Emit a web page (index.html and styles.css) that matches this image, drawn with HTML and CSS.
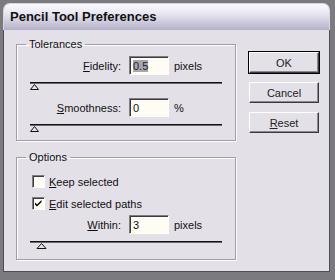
FILE: index.html
```html
<!DOCTYPE html>
<html lang="en">
<head>
    <meta charset="UTF-8">
    <title>Pencil Tool Preferences</title>
    <link rel="stylesheet" href="styles.css">
</head>
<body>
    <div class="window">
        <div class="titlebar">Pencil Tool Preferences</div>
        <div class="dialog">
            <div class="groups">
                <fieldset class="group">
                    <legend>Tolerances</legend>
                    <div class="field first">
                        <label class="field-label"><u>F</u>idelity:</label>
                        <span class="input"><span class="selected">0.5</span></span>
                        <span class="unit">pixels</span>
                    </div>
                    <div class="slider">
                        <svg width="192" height="9" viewBox="0 0 192 9">
                            <rect x="0" y="0" width="192" height="1" fill="#111"/>
                            <rect x="0" y="1" width="192" height="1" fill="#6a6870"/>
                            <polygon points="4.5,2.5 8.5,7.5 0.5,7.5" fill="#e4e0e8" stroke="#111"/>
                        </svg>
                    </div>
                    <div class="field">
                        <label class="field-label"><u>S</u>moothness:</label>
                        <span class="input">0</span>
                        <span class="unit">%</span>
                    </div>
                    <div class="slider">
                        <svg width="192" height="9" viewBox="0 0 192 9">
                            <rect x="0" y="0" width="192" height="1" fill="#111"/>
                            <rect x="0" y="1" width="192" height="1" fill="#6a6870"/>
                            <polygon points="4.5,2.5 8.5,7.5 0.5,7.5" fill="#e4e0e8" stroke="#111"/>
                        </svg>
                    </div>
                </fieldset>

                <fieldset class="group options">
                    <legend>Options</legend>
                    <div class="check first">
                        <span class="box"></span>
                        <span><u>K</u>eep selected</span>
                    </div>
                    <div class="check">
                        <span class="box">
                            <svg width="11" height="11" viewBox="0 0 11 11">
                                <path d="M2 4.5 L4 6.5 L8.5 2 L8.5 4 L4 8.5 L2 6.5 Z" fill="#000"/>
                            </svg>
                        </span>
                        <span><u>E</u>dit selected paths</span>
                    </div>
                    <div class="field within">
                        <label class="field-label"><u>W</u>ithin:</label>
                        <span class="input">3</span>
                        <span class="unit">pixels</span>
                    </div>
                    <div class="slider">
                        <svg width="192" height="9" viewBox="0 0 192 9">
                            <rect x="0" y="0" width="192" height="1" fill="#111"/>
                            <rect x="0" y="1" width="192" height="1" fill="#6a6870"/>
                            <polygon points="11.5,2.5 16,7.5 7,7.5" fill="#e4e0e8" stroke="#111"/>
                        </svg>
                    </div>
                </fieldset>
            </div>

            <div class="buttons">
                <button class="btn default">OK</button>
                <button class="btn">Cancel</button>
                <button class="btn"><u>R</u>eset</button>
            </div>
        </div>
    </div>
</body>
</html>
```

FILE: styles.css
```css
body {
    margin: 0;
    padding: 3px 0 0 3px;
    background: #7b7a7e;
    font-family: "Liberation Sans", Arial, sans-serif;
    font-size: 11px;
    color: #111;
}
.window {
    width: 327px;
}
.titlebar {
    height: 27px;
    box-sizing: border-box;
    padding: 5px 0 0 6px;
    border: 1px solid #d8d6dc;
    border-bottom: none;
    border-radius: 7px 7px 0 0;
    background: linear-gradient(#fbfaff, #e6e4f0 40%, #b4b0c8);
    font-size: 13px;
    font-weight: bold;
    line-height: 16px;
    color: #111;
}
.dialog {
    display: flex;
    height: 242px;
    box-sizing: border-box;
    padding: 7px 0 0 12px;
    border: 1px solid #4e4c5c;
    border-top: none;
    background: #e4e0e8;
}
.groups {
    width: 220px;
}
.group {
    width: 220px;
    box-sizing: border-box;
    margin: 0;
    padding: 0 0 7px 0;
    border: 1px solid #a09cac;
    box-shadow: 1px 1px 0 #fff, inset 1px 1px 0 #fff;
}
.group legend {
    margin-left: 9px;
    padding: 0 3px;
    font-size: 11px;
    line-height: 14px;
}
.options {
    margin-top: 9px;
    padding-bottom: 9px;
}
.field {
    display: flex;
    align-items: center;
    height: 19px;
    margin-top: 7px;
}
.field.first {
    margin-top: 5px;
}
.field.within {
    margin-top: 5px;
}
.field-label {
    width: 104px;
    text-align: right;
}
.input {
    width: 40px;
    height: 19px;
    box-sizing: border-box;
    margin-left: 8px;
    padding: 2px 0 0 3px;
    border: 1px solid;
    border-color: #7e7c84 #fff #fff #7e7c84;
    box-shadow: inset 1px 1px 0 #3c3a40;
    background: #fffcf4;
    line-height: 14px;
    font-size: 11px;
}
.selected {
    background: #a8a6ae;
    color: #222;
}
.unit {
    margin-left: 5px;
}
.slider {
    height: 9px;
    margin: 7px 0 0 13px;
}
.slider svg {
    display: block;
}
.check {
    display: flex;
    align-items: center;
    height: 13px;
    margin: 9px 0 0 15px;
}
.check.first {
    margin-top: 11px;
}
.box {
    width: 13px;
    height: 13px;
    box-sizing: border-box;
    margin-right: 4px;
    border: 1px solid;
    border-color: #7e7c84 #fff #fff #7e7c84;
    box-shadow: inset 1px 1px 0 #3c3a40;
    background: #fffcf4;
}
.box svg {
    display: block;
}
.buttons {
    display: flex;
    flex-direction: column;
    gap: 9px;
    margin: 15px 0 0 13px;
}
.btn {
    width: 70px;
    height: 21px;
    padding: 0;
    border: 1px solid;
    border-color: #fff #3c3a40 #3c3a40 #fff;
    box-shadow: inset -1px -1px 0 #8a8890;
    background: #e4e0e8;
    font-family: "Liberation Sans", Arial, sans-serif;
    font-size: 11px;
    font-weight: normal;
    color: #222;
}
.btn.default {
    outline: 1px solid #000;
}
```
